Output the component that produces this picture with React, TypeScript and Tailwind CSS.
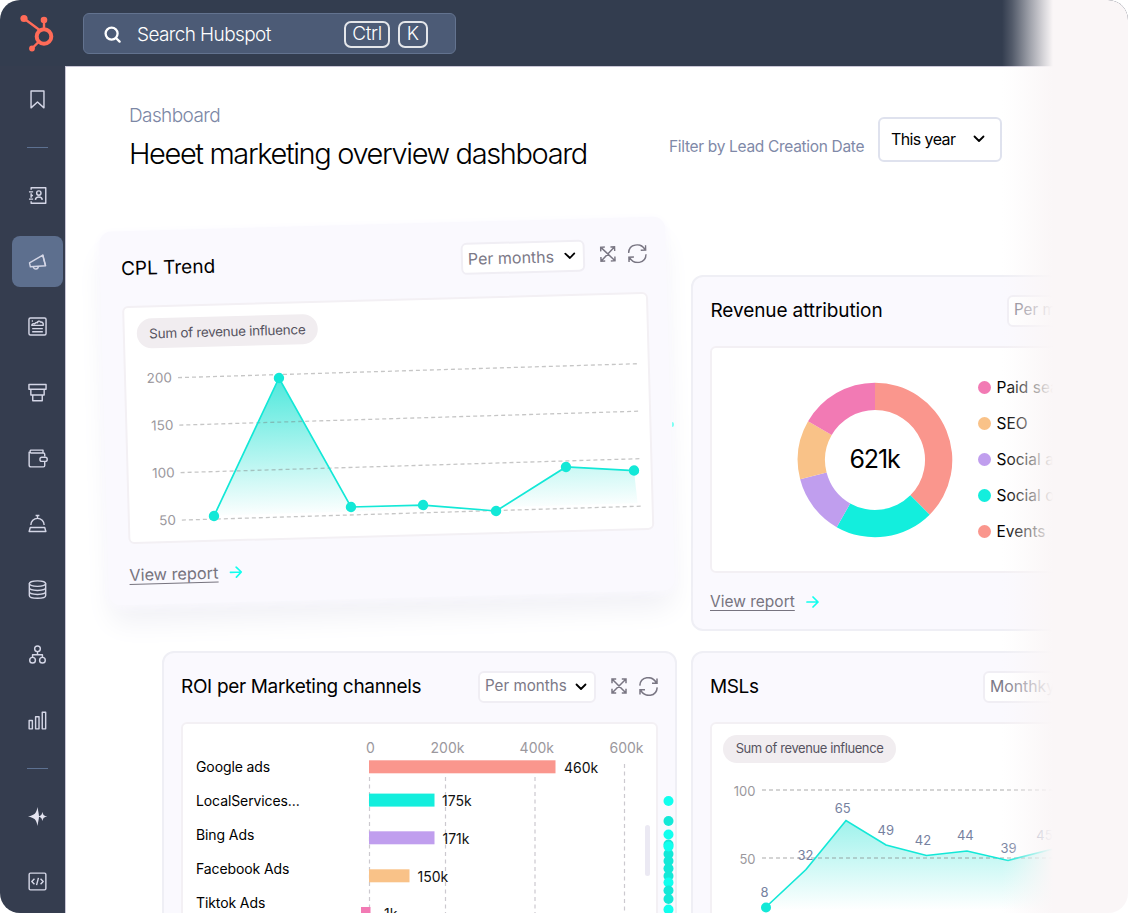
import { ReactNode } from "react";

const ICONS: Record<string, ReactNode> = {
    bookmark: <path d="M3.2 1h13.6v17.8L10 12.6l-6.8 6.2z" />,
    contacts: (
        <>
            <path d="M3.3 4V1.8h15.4v16.4H3.3V16M3.3 7.6v4.8" />
            <path d="M1 6.2h4.4M1 13.8h4.4M3.3 10h2" />
            <circle cx="11.4" cy="7.4" r="2.3" />
            <path d="M7.8 14.6c.2-4 7-4 7.2 0" />
        </>
    ),
    megaphone: (
        <>
            <path d="M15.6 3.2 1.6 11.4l.9 4.2 16-1.2z" />
            <path d="M15.4 3l3 11.6M5.6 15.4c.2 3.6 5.4 3.4 5.2-.4" />
        </>
    ),
    news: (
        <>
            <rect x="1" y="1" width="18" height="18" rx="1.6" />
            <path d="M4 8.8h12c.6-2.4-1-3.8-2.8-3.4C12 3.4 10 4.6 10 6c-1.6-.8-2.6.6-3 1.2-1.2-.6-2.8.2-3 1.6z" />
            <path d="M4.4 12.2h11.2M4.4 15.6h11.2M4 4.2h1.2" />
        </>
    ),
    funnel: <path d="M1 1.6h18v5H1zM3 6.6h14v6H3zM5 12.6h10v6H5z" />,
    wallet: (
        <>
            <path d="M17.6 8V5.6a1.4 1.4 0 0 0-1.4-1.4H3a1.8 1.8 0 0 1 0-3h12.8v2.6M1.2 2.8v14a2 2 0 0 0 2 2h13a1.4 1.4 0 0 0 1.4-1.4v-3.8" />
            <rect x="12.6" y="8.6" width="7.6" height="4.4" rx="2" />
        </>
    ),
    bell: <path d="M1.2 18.4h17.6l-1.2-4.2H2.4zM3 11.6a7 7 0 0 1 14 0M8 1.6h4M10 1.6v2.6" />,
    database: (
        <>
            <ellipse cx="10" cy="3.8" rx="8.6" ry="2.9" />
            <path d="M1.4 3.8v12.4c0 4 17.2 4 17.2 0V3.8M1.4 8c0 4 17.2 4 17.2 0M1.4 12.2c0 4 17.2 4 17.2 0" />
        </>
    ),
    nodes: (
        <>
            <circle cx="10" cy="4" r="3" />
            <circle cx="4.8" cy="16" r="3" />
            <circle cx="15.2" cy="16" r="3" />
            <path d="M10 7v3.2M4.8 13v-2.8h10.4V13" />
        </>
    ),
    bars: <path d="M1.2 10h3.4v8.8H1.2zM8 6h3.6v12.8H8zM15 1.4h3.6v17.4H15z" />,
    sparkle: (
        <g fill="#e4e4f0" stroke="none">
            <path d="M10 0c.8 5 1.6 8 1.6 10S10.800 15 10 20C8.800 13.200 7 11.400 0 10 7 8.600 8.800 6.800 10 0z" />
            <path d="M15.200 5c.7 3.600 1.400 4.300 5.200 5-3.800.7-4.500 1.400-5.200 5-.7-3.600-1.400-4.300-5.200-5 3.800-.7 4.500-1.400 5.200-5z" />
        </g>
    ),
    code: (
        <>
            <rect x="1.2" y="1.2" width="17.6" height="17.6" rx="1.4" />
            <path d="M6.8 7.2 4 10l2.8 2.8M13.2 7.2 16 10l-2.8 2.8M11 6.2 9 13.8" />
        </>
    ),
};

const NAV = ["contacts", "megaphone", "news", "funnel", "wallet", "bell", "database", "nodes", "bars"];

const CHANNELS = [
    { name: "Google ads", value: "460k", x: 369, y: 760, width: 186.5, labelX: 564, color: "#fa968d" },
    { name: "LocalServices...", value: "175k", x: 369, y: 793.3, width: 65.5, labelX: 442, color: "#13eedd" },
    { name: "Bing Ads", value: "171k", x: 369, y: 831, width: 65.5, labelX: 442.5, color: "#c09eee" },
    { name: "Facebook Ads", value: "150k", x: 369, y: 869, width: 40.5, labelX: 417.5, color: "#f9c288" },
    { name: "Tiktok Ads", value: "1k", x: 361, y: 906.7, width: 9.5, labelX: 384, color: "#f27ab4" },
];

const SEGMENTS = [
    { color: "#fa968d", from: 0, to: 135 },
    { color: "#13eedd", from: 135, to: 209.7 },
    { color: "#c09eee", from: 209.7, to: 255.5 },
    { color: "#f9c288", from: 255.5, to: 300 },
    { color: "#f27ab4", from: 300, to: 360 },
];

const LEGEND = [
    { name: "Paid search", dot: "bg-[#f27ab4]" },
    { name: "SEO", dot: "bg-[#f9c288]" },
    { name: "Social ads", dot: "bg-[#c09eee]" },
    { name: "Social organic", dot: "bg-[#13eedd]" },
    { name: "Events", dot: "bg-[#fa968d]" },
];

const CPL_POINTS = [
    [107.2, 287.3],
    [175.9, 151.1],
    [244.4, 282],
    [316.5, 282],
    [389.3, 289.9],
    [460.4, 247.8],
    [528.3, 253.2],
];

const MSL_POINTS = [
    { x: 766, y: 907, label: "8", lx: 764.5, ly: 896.5 },
    { x: 806, y: 869.5, label: "32", lx: 805.5, ly: 859.5 },
    { x: 846, y: 820.5, label: "65", lx: 842.8, ly: 812.5 },
    { x: 886, y: 845, label: "49", lx: 885.8, ly: 835 },
    { x: 926.5, y: 855.5, label: "42", lx: 923, ly: 845 },
    { x: 967, y: 851, label: "44", lx: 965.3, ly: 840 },
    { x: 1008, y: 860.5, label: "39", lx: 1008.5, ly: 853 },
    { x: 1049, y: 850, label: "45", lx: 1044.5, ly: 840 },
    { x: 1090, y: 842, label: "47", lx: 1090, ly: 830 },
];

const STACK = [
    { y: 821, dark: true },
    { y: 844.5, dark: true },
    { y: 854, dark: true },
    { y: 861, dark: true },
    { y: 868.5, dark: true },
    { y: 876, dark: true },
    { y: 801, dark: false },
    { y: 834.5, dark: false },
    { y: 846.5, dark: false },
    { y: 882.5, dark: false },
    { y: 890.5, dark: true },
    { y: 899, dark: true },
    { y: 909.5, dark: false },
];

function NavIcon({ name }: { name: string }) {
    return (
        <svg className="size-[19px] overflow-visible" viewBox="0 0 20 20" fill="none" stroke="#d4d6e6" strokeWidth="1.5" strokeLinejoin="round">
            {ICONS[name]}
        </svg>
    );
}

function Chevron() {
    return (
        <svg className="h-2 w-3 shrink-0" viewBox="0 0 12 8" fill="none" stroke="#000" strokeWidth="1.8" strokeLinecap="round" strokeLinejoin="round">
            <path d="M1.5 1.5 6 6l4.5-4.5" />
        </svg>
    );
}

function Select({ label, size }: { label: string; size: string }) {
    return (
        <div className={`mb-[2px] flex h-8 shrink-0 items-center justify-between rounded-md border-2 border-[#f0eef4] bg-white pl-[5px] pr-[7px] text-[#7c7987] ${size}`}>
            <span className="whitespace-nowrap">{label}</span>
            <Chevron />
        </div>
    );
}

function CardActions() {
    return (
        <div className="mb-[3px] flex shrink-0 items-center gap-[12px] pl-[16px]">
            <svg className="size-[16px]" viewBox="0 0 16 16" fill="none" stroke="#797683" strokeWidth="1.5">
                <path d="M1 5.2V1h4.2M10.8 1H15v4.2M15 10.8V15h-4.2M5.2 15H1v-4.2M1 1l14 14M15 1 1 15" />
            </svg>
            <svg className="size-[19px]" viewBox="0 0 19 19" fill="none" stroke="#797683" strokeWidth="1.5">
                <path d="M.8 8.6C1.4-.8 13-2 17.4 5.8M18.2 10.4C17.6 19.8 6 21 1.6 13.2M18 1.4v4.8h-5M1 17.6v-4.8h5" />
            </svg>
        </div>
    );
}

function ViewReport({ size }: { size: string }) {
    return (
        <div className="flex items-center gap-[11px]">
            <span className={`whitespace-nowrap leading-[20px] text-[#77747f] underline decoration-1 underline-offset-[3px] ${size}`}>View report</span>
            <svg className="h-3 w-[13px]" viewBox="0 0 13 12" fill="none" stroke="#11ffee" strokeWidth="1.7" strokeLinecap="round" strokeLinejoin="round">
                <path d="M1 6h11M7 1l5 5-5 5" />
            </svg>
        </div>
    );
}

function CplCard() {
    const line = CPL_POINTS.map((p) => p.join(",")).join(" ");
    return (
        <section className="relative z-10 -ml-[58px] flex h-[374px] w-[566px] -rotate-[1.55deg] flex-col rounded-xl bg-[#faf9fe] pl-[21px] pr-[19px] shadow-[0_2px_8px_1px_#faf9fe,0_20px_28px_-2px_#f1f1f6]">
            <div className="flex h-[75px] items-center">
                <h2 className="flex-1 pt-px text-[19px]">CPL Trend</h2>
                <Select label="Per months" size="-mr-px w-[124px] text-[16px]" />
                <CardActions />
            </div>
            <div className="h-[238px] rounded-md border-2 border-[#f3f0f4] bg-white pl-3 pt-[11px]">
                <div className="flex h-[30px] w-[181px] items-center justify-center rounded-full bg-[#f1edf0] text-[13.5px] tracking-[-0.3px] text-[#56535f]">
                    Sum of revenue influence
                </div>
                <svg className="-ml-3 block h-[190px] w-[522px]" viewBox="23 118 522 190" fill="none">
                    <defs>
                        <linearGradient id="cpl" x1="0" y1="0" x2="0" y2="1">
                            <stop offset="0" stopColor="#13e0d0" stopOpacity="0.75" />
                            <stop offset="1" stopColor="#13e0d0" stopOpacity="0" />
                        </linearGradient>
                    </defs>
                    <polygon points={`${line} 531,286 107,287`} fill="url(#cpl)" />
                    {["200", "150", "100", "50"].map((label, i) => (
                        <g key={label}>
                            <text x="69" y={152.5 + i * 47.5} textAnchor="end" fontSize="13.5" fill="#9b989d">{label}</text>
                            <path d={`M75 ${148 + i * 47.5}L537 ${146.5 + i * 47.5}`} stroke="#777" strokeOpacity="0.42" strokeWidth="1.3" strokeDasharray="4 3" />
                        </g>
                    ))}
                    <polyline points={line} stroke="#13e8d7" strokeWidth="1.7" />
                    {CPL_POINTS.map(([x, y]) => (
                        <circle key={x} cx={x} cy={y} r="5.2" fill="#13e8d7" />
                    ))}
                </svg>
            </div>
            <div className="pt-[21px]">
                <ViewReport size="text-[16.3px]" />
            </div>
        </section>
    );
}

function RoiCard() {
    return (
        <section className="relative mt-[53px] h-[400px] w-[515px] rounded-xl border-2 border-[#efeff5] bg-[#faf9fe] px-[17px]">
            <div className="flex h-[69px] items-center">
                <h2 className="flex-1 whitespace-nowrap pb-px text-[19px] tracking-[-0.33px]">ROI per Marketing channels</h2>
                <Select label="Per months" size="-mr-px w-[118px] text-[15.2px]" />
                <CardActions />
            </div>
            <div className="flex h-[320px] rounded-md border-2 border-[#f3f0f4] bg-white pl-[13px] pt-[26px]">
                <div className="w-[155px] shrink-0 text-[14px] leading-[34px] tracking-[-0.1px]">
                    {CHANNELS.map((channel) => (
                        <div key={channel.name}>{channel.name}</div>
                    ))}
                </div>
                <svg className="-mt-[26px] block h-[190px] w-[304px] shrink-0" viewBox="351 724 304 190">
                    {["0", "200k", "400k", "600k"].map((label, i) => (
                        <text key={label} x={[370.5, 447.5, 536.8, 626.5][i]} y="752.5" textAnchor="middle" fontSize="14" fill="#9b989d">{label}</text>
                    ))}
                    {[369.5, 445.5, 535, 624.5].map((x, i) => (
                        <path key={x} d={`M${x} ${i === 3 ? 764 : 777}V913`} stroke="#ccc9cf" strokeWidth="1.2" strokeDasharray="4 3.5" />
                    ))}
                    {CHANNELS.map((c) => (
                        <g key={c.name}>
                            <rect x={c.x} y={c.y + 0.3} width={c.width} height="13" fill={c.color} />
                            <text x={c.labelX} y={c.y + 12.5} fontSize="14" fill="#111">{c.value}</text>
                        </g>
                    ))}
                    <rect x="645" y="825" width="5" height="51" rx="2.5" fill="#ebe9f3" />
                </svg>
            </div>
            <svg className="absolute right-[1px] top-[139px] h-[130px] w-3" viewBox="662 792 12 130">
                {STACK.map((dot) => (
                    <circle key={dot.y} cx="668.5" cy={dot.y} r="5" fill={dot.dark ? "#13e8d7" : "#11ffee"} />
                ))}
            </svg>
        </section>
    );
}

function arc(from: number, to: number) {
    const at = (deg: number, r: number) => {
        const a = (deg * Math.PI) / 180;
        return `${80 + r * Math.sin(a)} ${80 - r * Math.cos(a)}`;
    };
    return `M${at(from, 77.3)}A77.3 77.3 0 0 1 ${at(to, 77.3)}L${at(to, 50)}A50 50 0 0 0 ${at(from, 50)}Z`;
}

function RevenueCard() {
    return (
        <section className="h-[356px] w-[515px] rounded-xl border-2 border-[#efeff5] bg-[#faf9fe] px-[17px]">
            <div className="flex h-[69px] items-center">
                <h2 className="flex-1 whitespace-nowrap pb-px pl-[0.5px] text-[19px] tracking-[-0.1px]">Revenue attribution</h2>
                <Select label="Per months" size="-mr-px w-[118px] text-[15.2px]" />
                <CardActions />
            </div>
            <div className="flex h-[227px] items-center rounded-md border-2 border-[#f3f0f4] bg-white pl-[82.5px]">
                <div className="grid size-40 shrink-0 place-items-center">
                    <svg className="col-start-1 row-start-1 size-40" viewBox="0 0 160 160">
                        {SEGMENTS.map((s) => (
                            <path key={s.color} d={arc(s.from, s.to)} fill={s.color} />
                        ))}
                    </svg>
                    <span className="col-start-1 row-start-1 pt-px text-[25px] tracking-[-1.1px]">621k</span>
                </div>
                <ul className="ml-[23px]">
                    {LEGEND.map((item) => (
                        <li key={item.name} className="flex h-9 items-center gap-[6px] whitespace-nowrap text-[15.5px]">
                            <span className={`size-[13px] rounded-full ${item.dot}`} />
                            {item.name}
                        </li>
                    ))}
                </ul>
            </div>
            <div className="pt-[19px]">
                <ViewReport size="text-[15.5px]" />
            </div>
        </section>
    );
}

function MslCard() {
    const line = MSL_POINTS.map((p) => `${p.x},${p.y}`).join(" ");
    return (
        <section className="mt-[20px] h-[400px] w-[515px] rounded-xl border-2 border-[#efeff5] bg-[#faf9fe] px-[17px]">
            <div className="flex h-[69px] items-center">
                <h2 className="w-[273px] pb-px text-[19px] tracking-[-0.4px]">MSLs</h2>
                <Select label="Monthky" size="w-[119px] text-[15.8px]" />
            </div>
            <div className="h-[320px] rounded-md border-2 border-[#f3f0f4] bg-white pl-[11px] pt-[11px]">
                <div className="flex h-[28px] w-[173px] items-center justify-center rounded-full bg-[#f1edf0] text-[13px] tracking-[-0.4px] text-[#56535f]">
                    Sum of revenue influence
                </div>
                <svg className="-ml-[11px] block h-[150px] w-[471px]" viewBox="712 763 471 150" fill="none">
                    <defs>
                        <linearGradient id="msl" gradientUnits="userSpaceOnUse" x1="0" y1="818" x2="0" y2="910">
                            <stop offset="0" stopColor="#13e0d0" stopOpacity="0.42" />
                            <stop offset="1" stopColor="#13e0d0" stopOpacity="0" />
                        </linearGradient>
                    </defs>
                    <polygon points={`${line} 1090,913 766,913`} fill="url(#msl)" />
                    {[
                        ["100", 790],
                        ["50", 858],
                    ].map(([label, y]) => (
                        <g key={label}>
                            <text x="755.5" y={Number(y) + 5.5} textAnchor="end" fontSize="13" fill="#9b989d">{label}</text>
                            <path d={`M762 ${y}H1100`} stroke="#777" strokeOpacity="0.42" strokeWidth="1.3" strokeDasharray="4 3" />
                        </g>
                    ))}
                    <polyline points={line} stroke="#13e8d7" strokeWidth="1.7" />
                    <circle cx="766" cy="907.5" r="5" fill="#13e8d7" />
                    {MSL_POINTS.map((p) => (
                        <text key={p.label} x={p.lx} y={p.ly} textAnchor="middle" fontSize="13" fill="#76819f">{p.label}</text>
                    ))}
                </svg>
            </div>
        </section>
    );
}

export default function App() {
    return (
        <div className="relative flex h-[913px] w-[1128px] flex-col overflow-hidden rounded-[20px] bg-white font-['Inter','Liberation_Sans',sans-serif] text-black">
            <header className="flex h-[66px] shrink-0 items-center bg-[#333d4f]">
                <svg className="ml-[20px] h-[38px] w-[35px]" viewBox="20.5 14 35 38" fill="none" stroke="#ff6b58">
                    <circle cx="44.5" cy="36.5" r="7.3" strokeWidth="4" />
                    <path d="M24.5 18.5 40 30M44.5 20v10M32.5 48.5l7-7" strokeWidth="2.4" />
                    <g fill="#ff6b58" stroke="none">
                        <circle cx="24.5" cy="18.5" r="3.6" />
                        <circle cx="44.5" cy="20" r="3.3" />
                        <circle cx="32.5" cy="48.5" r="2.9" />
                    </g>
                </svg>
                <div className="ml-[28px] flex h-[41px] w-[373px] items-center rounded-md border border-[#63738f] bg-[#4c5b76] pl-[20px] font-light text-white">
                    <svg className="mt-[2px] size-[17px]" viewBox="0 0 17 17" fill="none" stroke="#fff" strokeWidth="2.3" strokeLinecap="round">
                        <circle cx="7.6" cy="7.6" r="6" />
                        <path d="m12.2 12.2 3.4 3.4" />
                    </svg>
                    <span className="ml-[16px] w-[207px] whitespace-nowrap pt-[4px] text-[19px] tracking-[-0.6px]">Search Hubspot</span>
                    <kbd className="mt-[3px] flex h-[27px] w-[46px] items-center justify-center rounded-[7px] border-2 border-white/85 font-['Inter'] text-[19px] tracking-[-0.4px]">Ctrl</kbd>
                    <kbd className="ml-[8px] mt-[3px] flex h-[27px] w-[30px] items-center justify-center rounded-[7px] border-2 border-white/85 font-['Inter'] text-[19px]">K</kbd>
                </div>
            </header>

            <div className="flex min-h-0 flex-1">
                <nav className="flex w-[65px] shrink-0 flex-col items-center bg-[#353d4f] pl-[10px]">
                    <div className="flex h-[66px] shrink-0 items-center">
                        <NavIcon name="bookmark" />
                    </div>
                    <div className="flex h-[31px] shrink-0 items-center">
                        <hr className="w-[21px] border-[#5d7191]" />
                    </div>
                    {NAV.map((name) => (
                        <div key={name} className="flex h-[65.6px] shrink-0 items-center">
                            <div className={`flex size-[51px] items-center justify-center rounded-lg ${name === "megaphone" ? "bg-[#5d6f8e]" : ""}`}>
                                <NavIcon name={name} />
                            </div>
                        </div>
                    ))}
                    <div className="flex h-[30px] shrink-0 items-center">
                        <hr className="w-[21px] border-[#5d7191]" />
                    </div>
                    <div className="flex h-[66px] shrink-0 items-center">
                        <NavIcon name="sparkle" />
                    </div>
                    <div className="flex h-[65px] shrink-0 items-center">
                        <NavIcon name="code" />
                    </div>
                </nav>

                <main className="relative min-w-0 flex-1 overflow-hidden border-l border-t border-[#c9c6d6] bg-white">
                    <div className="flex h-[157px] pl-[63px]">
                        <div className="w-[540px] pt-[36px] font-light">
                            <div className="text-[19px] leading-[26px] tracking-[-0.6px] text-[#7c87a5]">Dashboard</div>
                            <h1 className="mt-[6px] whitespace-nowrap text-[29px] leading-[38px] tracking-[-1.38px]">Heeet marketing overview dashboard</h1>
                        </div>
                        <div className="w-[209px] whitespace-nowrap pt-[68px] text-[15.5px] tracking-[-0.32px] text-[#7f89a8]">Filter by Lead Creation Date</div>
                        <div className="mt-[50px] flex h-[45px] w-[124px] items-center justify-between rounded-md border-2 border-[#dfe2ee] pb-px pl-[11px] pr-[15px] text-[16px] tracking-[-0.6px]">
                            This year
                            <Chevron />
                        </div>
                    </div>
                    <div className="flex gap-[14px] pl-[96px]">
                        <div className="w-[515px] shrink-0">
                            <CplCard />
                            <RoiCard />
                        </div>
                        <div className="shrink-0 pt-[51px]">
                            <RevenueCard />
                            <MslCard />
                        </div>
                    </div>
                    <span className="absolute left-[606px] top-[355px] z-20 h-[5px] w-[2px] rounded-r-full bg-[#7dfff3]" />
                </main>
            </div>

            <div className="absolute inset-y-0 right-0 z-30 w-[126px] bg-[linear-gradient(90deg,#faf6f700_0,#faf6f728_10px,#faf6f78c_28px,#faf6f7d4_42px,#faf6f7_51px)]" />
        </div>
    );
}
